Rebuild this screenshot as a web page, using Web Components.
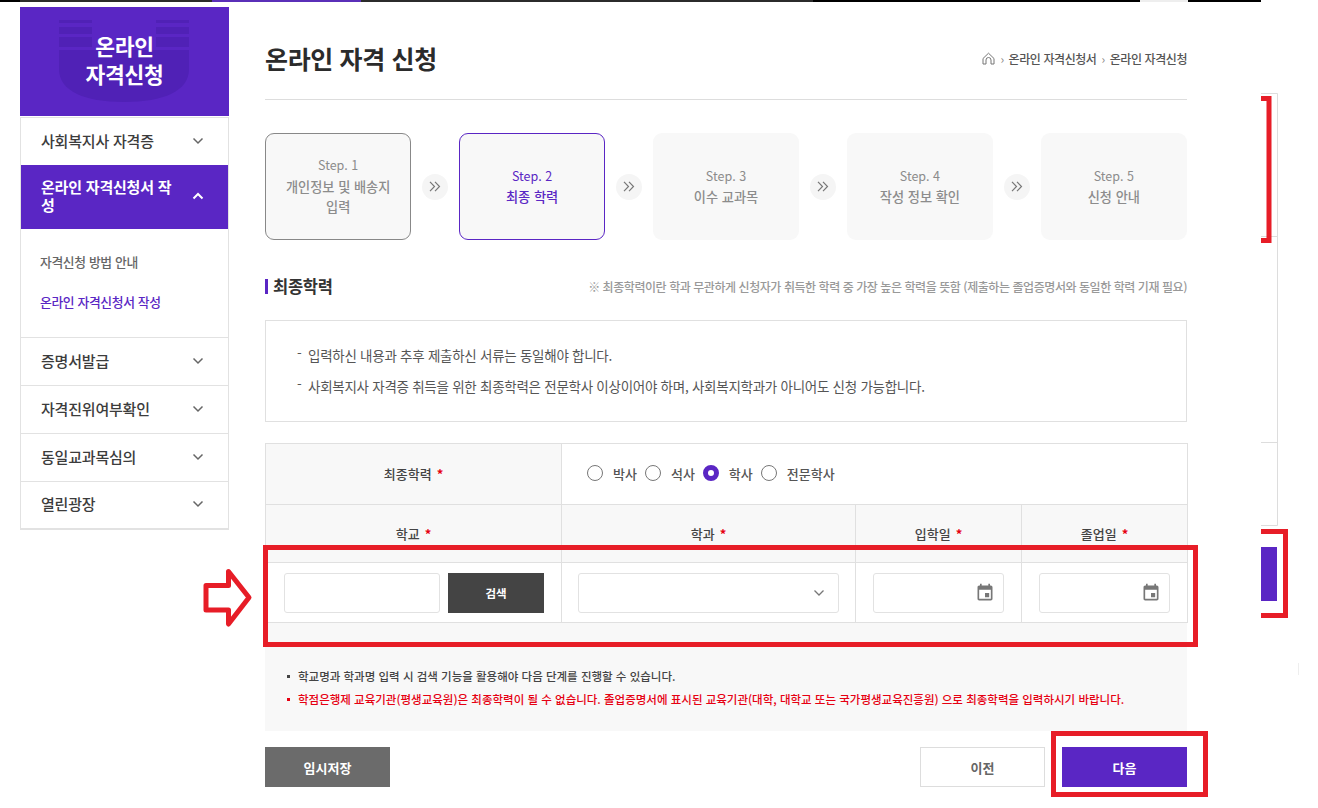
<!DOCTYPE html>
<html lang="ko">
<head>
<meta charset="utf-8">
<title>온라인 자격 신청</title>
<style>
  html, body { margin: 0; background: #fff; }
  body { font-family: "Noto Sans CJK KR", "Noto Sans", sans-serif; color: #333; }
</style>
</head>
<body>
<page-shell>
  <side-nav slot="side"></side-nav>

  <page-head title-text="온라인 자격 신청"></page-head>

  <step-row>
    <step-card state="done" label="Step. 1">개인정보 및 배송지<br>입력</step-card>
    <step-arrow></step-arrow>
    <step-card state="current" label="Step. 2">최종 학력</step-card>
    <step-arrow></step-arrow>
    <step-card label="Step. 3">이수 교과목</step-card>
    <step-arrow></step-arrow>
    <step-card label="Step. 4">작성 정보 확인</step-card>
    <step-arrow></step-arrow>
    <step-card label="Step. 5">신청 안내</step-card>
  </step-row>

  <section-head title-text="최종학력">※ 최종학력이란 학과 무관하게 신청자가 취득한 학력 중 가장 높은 학력을 뜻함 (제출하는 졸업증명서와 동일한 학력 기재 필요)</section-head>

  <info-box>
    <li>입력하신 내용과 추후 제출하신 서류는 동일해야 합니다.</li>
    <li>사회복지사 자격증 취득을 위한 최종학력은 전문학사 이상이어야 하며, 사회복지학과가 아니어도 신청 가능합니다.</li>
  </info-box>

  <edu-form></edu-form>

  <note-box>
    <div>학교명과 학과명 입력 시 검색 기능을 활용해야 다음 단계를 진행할 수 있습니다.</div>
    <div data-warn>학점은행제 교육기관(평생교육원)은 최종학력이 될 수 없습니다. 졸업증명서에 표시된 교육기관(대학, 대학교 또는 국가평생교육진흥원) 으로 최종학력을 입력하시기 바랍니다.</div>
  </note-box>

  <form-actions></form-actions>

  <mark-layer slot="marks"></mark-layer>
</page-shell>

<script>
const chevron = (dir, color, w) => `<svg width="12" height="8" viewBox="0 0 12 8" fill="none" stroke="${color}" stroke-width="${w}"><path d="${dir === "up" ? "M1.5 6.5 6 2l4.5 4.5" : "M1.5 1.5 6 6l4.5-4.5"}"/></svg>`;

class PageShell extends HTMLElement {
  constructor() {
    super();
    this.attachShadow({ mode: "open" });
    this.shadowRoot.innerHTML = `
      <style>
        :host { display: block; position: relative; width: 1318px; height: 808px; overflow: hidden; }
        .top { display: flex; height: 2px; }
        .top i { display: block; }
        .wrap { display: flex; gap: 36px; padding: 5px 0 0 20px; }
        .main { width: 922px; display: flex; flex-direction: column; }
      </style>
      <div class="top">
        <i style="width:20px;background:#000"></i>
        <i style="width:192px;background:#2b2b2b"></i>
        <i style="width:149px;background:#5a2fb8"></i>
        <i style="width:452px;background:#2b2b2b"></i>
        <i style="width:327px;background:#000"></i>
        <i style="width:48px;background:#eee"></i>
        <i style="width:73px;background:#000"></i>
      </div>
      <div class="wrap">
        <slot name="side"></slot>
        <div class="main"><slot></slot></div>
      </div>
      <slot name="marks"></slot>`;
  }
}

class SideNav extends HTMLElement {
  constructor() {
    super();
    this.attachShadow({ mode: "open" });
    const items = ["증명서발급", "자격진위여부확인", "동일교과목심의", "열린광장"];
    this.shadowRoot.innerHTML = `
      <style>
        :host { display: block; width: 209px; flex: none; }
        .banner { position: relative; box-sizing: border-box; height: 109px; padding-bottom: 3px; background: #5a26c4; color: #fff; display: flex; flex-direction: column; align-items: center; justify-content: center; text-align: center; font-size: 21.5px; font-weight: 700; letter-spacing: -0.3px; }
        .banner svg { position: absolute; left: 0; top: 0; }
        .banner span { position: relative; display: block; height: 28px; line-height: 28px; }
        ul { list-style: none; margin: 1px 0 0; padding: 0; border: 1px solid #e2e2e2; border-bottom-width: 2px; }
        li { display: flex; align-items: center; justify-content: space-between; box-sizing: border-box; height: 48px; padding: 0 24px 2px 20px; font-size: 15px; font-weight: 500; color: #3c3c3c; border-top: 1px solid #e2e2e2; letter-spacing: -0.2px; }
        li:first-child { border-top: 0; height: 47px; }
        li:last-child { height: 47px; padding-bottom: 3px; }
        li svg { flex: none; }
        li.on { height: 64px; background: #5a26c4; color: #fff; font-weight: 700; line-height: 18px; border-top: 0; }
        li.on span { width: 138px; }
        .sub { display: block; height: 108px; padding: 23px 0 0 19px; box-sizing: border-box; border: 0; font-size: 12.8px; font-weight: 500; color: #666; letter-spacing: -0.35px; }
        .sub div { height: 40px; line-height: 20px; }
        .sub .cur { color: #5a26c4; }
      </style>
      <div class="banner">
        <svg width="209" height="109" viewBox="0 0 209 109" fill="#5021b6">
          <path d="M39 13h33v3H39zM39 20h33v7H39zM39 30h33v10H39zM136 13h33v3h-33zM136 20h33v7h-33zM136 30h33v10h-33z"/>
          <path d="M39 43H169V62c0 22-25 33-65 33S39 84 39 62z"/>
        </svg>
        <span>온라인</span>
        <span>자격신청</span>
      </div>
      <ul>
        <li><span>사회복지사 자격증</span>${chevron("down", "#666", 1.5)}</li>
        <li class="on"><span>온라인 자격신청서 작성</span>${chevron("up", "#fff", 2)}</li>
        <li class="sub"><div>자격신청 방법 안내</div><div class="cur">온라인 자격신청서 작성</div></li>
        ${items.map((t) => `<li><span>${t}</span>${chevron("down", "#666", 1.5)}</li>`).join("")}
      </ul>`;
  }
}

class PageHead extends HTMLElement {
  constructor() {
    super();
    this.attachShadow({ mode: "open" });
    this.shadowRoot.innerHTML = `
      <style>
        :host { display: flex; align-items: center; justify-content: space-between; box-sizing: border-box; height: 93px; padding-top: 10px; border-bottom: 1px solid #ddd; }
        h1 { margin: 0 0 1px; font-size: 25px; font-weight: 700; color: #2b2b2b; letter-spacing: -0.35px; }
        nav { display: flex; align-items: center; gap: 5px; margin-top: 1px; font-size: 12px; font-weight: 500; color: #555; letter-spacing: -0.42px; }
        nav b { font-weight: 400; color: #888; }
      </style>
      <h1></h1>
      <nav>
        <svg width="13" height="13" viewBox="0 0 13 13" fill="none" stroke="#777" stroke-width="1"><path d="M1 6.5 6.5 1.2 12 6.5V12H9V8a2.5 2.5 0 0 0-5 0v4H1z"/></svg>
        <b>›</b><span>온라인 자격신청서</span><b>›</b><span>온라인 자격신청</span>
      </nav>`;
    this.shadowRoot.querySelector("h1").textContent = this.getAttribute("title-text");
  }
}

class StepRow extends HTMLElement {
  constructor() {
    super();
    this.attachShadow({ mode: "open" });
    this.shadowRoot.innerHTML = `
      <style>:host { display: flex; align-items: center; justify-content: space-between; margin-top: 33px; }</style>
      <slot></slot>`;
  }
}

class StepCard extends HTMLElement {
  constructor() {
    super();
    this.attachShadow({ mode: "open" });
    this.shadowRoot.innerHTML = `
      <style>
        :host { display: flex; flex-direction: column; align-items: center; justify-content: center; box-sizing: border-box; width: 146.3px; height: 107px; background: #f8f8f8; border-radius: 9px; text-align: center; font-size: 13.2px; font-weight: 500; line-height: 20.5px; color: #8c8c8c; }
        :host([state="done"]) { border: 1px solid #888; }
        :host([state="current"]) { border: 1px solid #5a26c4; color: #5a26c4; }
        .label { height: 21.5px; font-size: 12.5px; font-weight: 400; line-height: 19.5px; }
      </style>
      <div class="label"></div>
      <div><slot></slot></div>`;
    this.shadowRoot.querySelector(".label").textContent = this.getAttribute("label");
  }
}

class StepArrow extends HTMLElement {
  constructor() {
    super();
    this.attachShadow({ mode: "open" });
    this.shadowRoot.innerHTML = `
      <style>:host { display: flex; align-items: center; justify-content: center; width: 26px; height: 26px; border-radius: 50%; background: #f5f5f5; }</style>
      <svg width="12" height="11" viewBox="0 0 12 11" fill="none" stroke="#777" stroke-width="1.2"><path d="M1 .8 5.5 5.500 1 10.200M6 .8l4.500 4.700L6 10.200"/></svg>`;
  }
}

class SectionHead extends HTMLElement {
  constructor() {
    super();
    this.attachShadow({ mode: "open" });
    this.shadowRoot.innerHTML = `
      <style>
        :host { display: flex; align-items: center; justify-content: space-between; margin-top: 35px; height: 22px; }
        h2 { margin: 0; padding-left: 5px; border-left: 3px solid #5a26c4; font-size: 16.5px; font-weight: 700; line-height: 15px; color: #333; letter-spacing: -0.3px; }
        p { margin: 0; font-size: 12px; font-weight: 500; color: #999; letter-spacing: -0.44px; }
      </style>
      <h2></h2>
      <p><slot></slot></p>`;
    this.shadowRoot.querySelector("h2").textContent = this.getAttribute("title-text");
  }
}

class InfoBox extends HTMLElement {
  constructor() {
    super();
    this.attachShadow({ mode: "open" });
    this.shadowRoot.innerHTML = `
      <style>
        :host { display: block; box-sizing: border-box; height: 102px; margin-top: 23px; padding: 19px 0 0 31px; border: 1px solid #e0e0e0; font-size: 13.5px; line-height: 31px; color: #555; letter-spacing: -0.27px; list-style: none; }
        ::slotted(li) { list-style: none; padding-left: 11px; position: relative; }
        ::slotted(li)::before { content: "-"; position: absolute; left: 0; top: -2px; }
      </style>
      <slot></slot>`;
  }
}

class EduForm extends HTMLElement {
  constructor() {
    super();
    this.attachShadow({ mode: "open" });
    const star = `<em>*</em>`;
    const radio = (t, on) => `<label><i class="${on ? "on" : ""}"></i>${t}</label>`;
    const cal = `<svg width="20" height="20" viewBox="0 0 24 24" fill="#777"><path d="M17 12h-5v5h5v-5zM16 1v2H8V1H6v2H5c-1.11 0-1.99.9-1.99 2L3 19c0 1.1.89 2 2 2h14c1.1 0 2-.9 2-2V5c0-1.1-.9-2-2-2h-1V1h-2zm3 18H5V8h14v11z"/></svg>`;
    this.shadowRoot.innerHTML = `
      <style>
        :host { display: grid; grid-template-columns: 295px 294px 166px 166px; grid-template-rows: 60px 58px 60px; margin-top: 21px; border: 1px solid #e0e0e0; border-bottom-width: 1px; box-sizing: content-box; width: 921px; font-size: 13px; font-weight: 500; color: #444; }
        .th { display: flex; align-items: center; justify-content: center; gap: 5px; background: #f8f8f8; }
        .th.top { padding-bottom: 2px; }
        .l { border-left: 1px solid #e0e0e0; }
        .t { border-top: 1px solid #e0e0e0; }
        em { font-style: normal; color: #e60012; font-weight: 700; }
        .radios { grid-column: 2 / 5; display: flex; align-items: center; padding: 0 0 2px 25px; gap: 8px; }
        label { display: flex; align-items: center; gap: 10px; font-size: 13px; color: #555; }
        i { display: block; box-sizing: border-box; width: 16px; height: 16px; border: 1px solid #777; border-radius: 50%; background: #fff; }
        i.on { border: 5px solid #5a26c4; }
        .td { display: flex; align-items: center; justify-content: space-between; box-sizing: border-box; padding: 0 16px; background: #fff; }
        .td.first { padding: 0 17px 0 18px; gap: 8px; }
        .field { display: flex; align-items: center; justify-content: flex-end; box-sizing: border-box; height: 40px; flex: 1; background: #fff; border: 1px solid #e2e2e2; border-radius: 3px; padding-right: 13px; }
        .td.date { padding: 0 17px; }
        .td.date .field { padding-right: 8px; }
        button { width: 96px; height: 40px; flex: none; border: 0; padding: 0; background: #444; color: #fff; font: 700 11.5px "Noto Sans CJK KR", sans-serif; }
      </style>
      <div class="th top">최종학력 ${star}</div>
      <div class="radios l">${radio("박사")}${radio("석사")}${radio("학사", true)}${radio("전문학사")}</div>
      <div class="th t">학교 ${star}</div>
      <div class="th t l">학과 ${star}</div>
      <div class="th t l">입학일 ${star}</div>
      <div class="th t l">졸업일 ${star}</div>
      <div class="td first t"><div class="field"></div><button>검색</button></div>
      <div class="td t l"><div class="field">${chevron("down", "#777", 1.3)}</div></div>
      <div class="td date t l"><div class="field">${cal}</div></div>
      <div class="td date t l"><div class="field">${cal}</div></div>`;
  }
}

class NoteBox extends HTMLElement {
  constructor() {
    super();
    this.attachShadow({ mode: "open" });
    this.shadowRoot.innerHTML = `
      <style>
        :host { display: block; box-sizing: border-box; height: 108px; padding: 42px 0 0 22px; background: #f8f8f8; font-size: 11.5px; font-weight: 500; line-height: 23px; color: #444; letter-spacing: 0; }
        ::slotted(div) { position: relative; padding-left: 11px; }
        ::slotted(div)::before { content: ""; position: absolute; left: 0; top: 10px; width: 3px; height: 3px; background: currentColor; }
        ::slotted([data-warn]) { color: #e60012; }
      </style>
      <slot></slot>`;
  }
}

class FormActions extends HTMLElement {
  constructor() {
    super();
    this.attachShadow({ mode: "open" });
    this.shadowRoot.innerHTML = `
      <style>
        :host { display: flex; justify-content: space-between; margin-top: 16px; }
        .right { display: flex; gap: 17px; }
        button { box-sizing: border-box; width: 125px; height: 40px; border: 0; padding: 0; font: 700 13px "Noto Sans CJK KR", sans-serif; color: #fff; }
        .save { background: #6b6b6b; }
        .prev { background: #fff; border: 1px solid #ddd; color: #666; }
        .next { background: #5a26c4; }
      </style>
      <button class="save">임시저장</button>
      <div class="right">
        <button class="prev">이전</button>
        <button class="next">다음</button>
      </div>`;
  }
}

// red markup drawn on top of the captured page, plus the clipped scraps at the right edge
class MarkLayer extends HTMLElement {
  constructor() {
    super();
    this.attachShadow({ mode: "open" });
    this.shadowRoot.innerHTML = `
      <style>
        :host { position: absolute; inset: 0; display: block; pointer-events: none; }
        svg { position: absolute; left: 0; top: 0; }
      </style>
      <svg width="1318" height="808" fill="none">
        <path d="M1261 93.5h16.5V525.5H1261M1261 236.5h16M1261 442.5h16" stroke="#ddd"/>
        <rect x="1261" y="547" width="16" height="54" fill="#5a26c4"/>
        <path d="M1298.5 663v12" stroke="#eee"/>
        <g stroke="#e71d27" stroke-width="5">
          <path d="M1261 98.5h8v142h-8"/>
          <path d="M1261 531.5h24.500v84H1261"/>
          <rect x="265.500" y="547.500" width="930" height="97"/>
          <rect x="1053.500" y="733.500" width="152" height="61"/>
          <path stroke-linejoin="round" d="M206 585.500h22.500v-14l20.500 26-20.500 26.500v-14H206z"/>
        </g>
      </svg>`;
  }
}

customElements.define("page-shell", PageShell);
customElements.define("side-nav", SideNav);
customElements.define("page-head", PageHead);
customElements.define("step-row", StepRow);
customElements.define("step-card", StepCard);
customElements.define("step-arrow", StepArrow);
customElements.define("section-head", SectionHead);
customElements.define("info-box", InfoBox);
customElements.define("edu-form", EduForm);
customElements.define("note-box", NoteBox);
customElements.define("form-actions", FormActions);
customElements.define("mark-layer", MarkLayer);
</script>
</body>
</html>
